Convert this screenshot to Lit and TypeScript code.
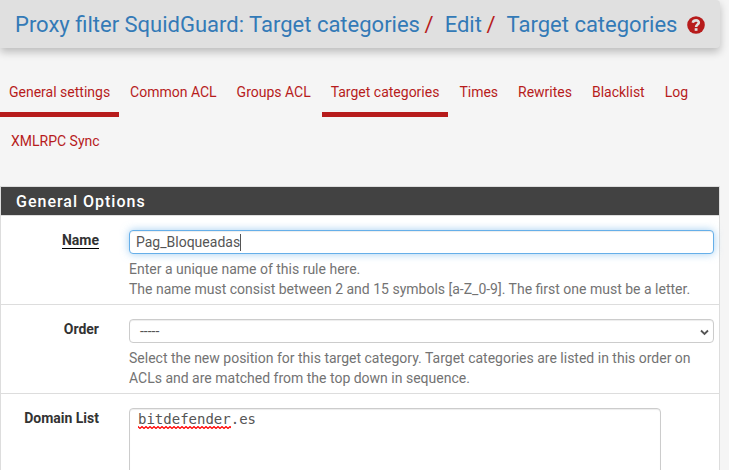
import { LitElement, html, css } from "lit";
import { customElement } from "lit/decorators.js";
import { classMap } from "lit/directives/class-map.js";

const TABS = [
  { label: "General settings", marked: true },
  { label: "Common ACL", marked: false },
  { label: "Groups ACL", marked: false },
  { label: "Target categories", marked: true },
  { label: "Times", marked: false },
  { label: "Rewrites", marked: false },
  { label: "Blacklist", marked: false },
  { label: "Log", marked: false },
  { label: "XMLRPC Sync", marked: false },
];

@customElement("app-root")
export class AppRoot extends LitElement {
  static styles = css`
    :host {
      display: block;
      box-sizing: border-box;
      height: 470px;
      overflow: hidden;
      background: #f5f5f5;
      color: #333;
      font: 14px/20px Roboto, sans-serif;
    }
    * { box-sizing: border-box; }
    .header {
      display: flex;
      align-items: center;
      width: 720px;
      height: 48px;
      padding: 2px 0 0 15px;
      background: #e0e0e0;
      border-radius: 0 4px 4px 0;
      box-shadow: 0 4px 8px rgba(0, 0, 0, 0.24);
      font-size: 22px;
      line-height: 26px;
      white-space: nowrap;
      color: #337ab7;
    }
    .sep { color: #b71c1c; margin: 0 11px 0 4.6px; }
    .help { flex: none; width: 18px; height: 18px; margin: 0 0 0 10px; }
    .tabs {
      display: flex;
      flex-wrap: wrap;
      width: 720px;
      margin-top: 20px;
    }
    .tab {
      height: 49px;
      margin-right: 1.96px;
      padding: 14px 9px 10px;
      border-bottom: 5px solid transparent;
      color: #b71c1c;
      white-space: nowrap;
    }
    .tab.marked { border-bottom-color: #b71c1c; }
    .tab:last-child { margin-left: 2px; }
    .panel {
      width: 720px;
      height: 400px;
      margin-top: 20px;
      border: 1px solid #ddd;
      background: #fff;
    }
    .title {
      height: 28px;
      padding: 1px 0 0 15px;
      background: #424242;
      color: #fff;
      font-size: 16px;
      font-weight: 500;
      line-height: 28px;
      letter-spacing: 1px;
    }
    .row {
      display: flex;
      height: 89px;
      padding: 14px 5px 0 0;
      border-top: 1px solid #ddd;
    }
    .label {
      width: 98px;
      margin-right: 30px;
      text-align: right;
      font-weight: 700;
    }
    .required { border-bottom: 1px solid #000; }
    .field { flex: 1; }
    .box {
      display: flex;
      align-items: center;
      height: 24px;
      border: 1px solid #ccc;
      border-radius: 4px;
      background: #fff;
      color: #555;
      box-shadow: inset 0 1px 1px rgba(0, 0, 0, 0.075);
    }
    .focused {
      padding-left: 6px;
      border-color: #66afe9;
      box-shadow: inset 0 1px 1px rgba(0, 0, 0, 0.075), 0 0 8px rgba(102, 175, 233, 0.6);
    }
    .caret { width: 1px; height: 17px; background: #555; }
    .select { padding: 0 4px 0 10px; justify-content: space-between; }
    .chevron { width: 9px; height: 7px; margin-top: 2px; }
    .hint { margin-top: 5px; color: #737373; }
    .area {
      width: 532px;
      height: 110px;
      padding: 0 8px;
      border: 1px solid #ccc;
      border-radius: 4px;
      color: #555;
      font: 14px/20px "DejaVu Sans Mono", monospace;
      box-shadow: inset 0 1px 1px rgba(0, 0, 0, 0.075);
    }
    .misspelt { position: relative; }
    .wave { position: absolute; left: 0; bottom: -2px; width: 93px; height: 3px; }
  `;

  render() {
    return html`
      <div class="header">
        <span>Proxy filter SquidGuard: Target categories</span><span class="sep">/</span>
        <span>Edit</span><span class="sep">/</span>
        <span>Target categories</span>
        <svg class="help" viewBox="0 0 18 18">
          <circle cx="9" cy="9" r="8.8" fill="#b71c1c" />
          <path d="M5.8 6.7C6.6 3.6 12 3.6 11.8 6.7C11.7 8.5 9.1 8.6 9.1 10.9" fill="none" stroke="#e0e0e0" stroke-width="2.6" />
          <rect x="7.7" y="12.2" width="2.8" height="2.6" fill="#e0e0e0" />
        </svg>
      </div>
      <nav class="tabs">
        ${TABS.map((t) => html`<a class=${classMap({ tab: true, marked: t.marked })}>${t.label}</a>`)}
      </nav>
      <section class="panel">
        <div class="title">General Options</div>
        <div class="row">
          <div class="label"><span class="required">Name</span></div>
          <div class="field">
            <div class="box focused"><span>Pag_Bloqueadas</span><i class="caret"></i></div>
            <div class="hint">Enter a unique name of this rule here.<br />The name must consist between 2 and 15 symbols [a-Z_0-9]. The first one must be a letter.</div>
          </div>
        </div>
        <div class="row">
          <div class="label">Order</div>
          <div class="field">
            <div class="box select">
              <span>-----</span>
              <svg class="chevron" viewBox="0 0 9 7"><path d="M1 1.5L4.5 5L8 1.5" fill="none" stroke="#555" stroke-width="1.8" /></svg>
            </div>
            <div class="hint">Select the new position for this target category. Target categories are listed in this order on<br />ACLs and are matched from the top down in sequence.</div>
          </div>
        </div>
        <div class="row">
          <div class="label">Domain List</div>
          <div class="field">
            <div class="area"><span class="misspelt">bitdefender<svg class="wave" viewBox="0 0 93 3">
              <defs><pattern id="zigzag" width="4" height="3" patternUnits="userSpaceOnUse"><path d="M-2 2.4L0 0.6L2 2.4L4 0.6L6 2.4" fill="none" stroke="#f00" stroke-width="1.3" /></pattern></defs>
              <rect width="93" height="3" fill="url(#zigzag)" /></svg></span>.es</div>
          </div>
        </div>
      </section>
    `;
  }
}
